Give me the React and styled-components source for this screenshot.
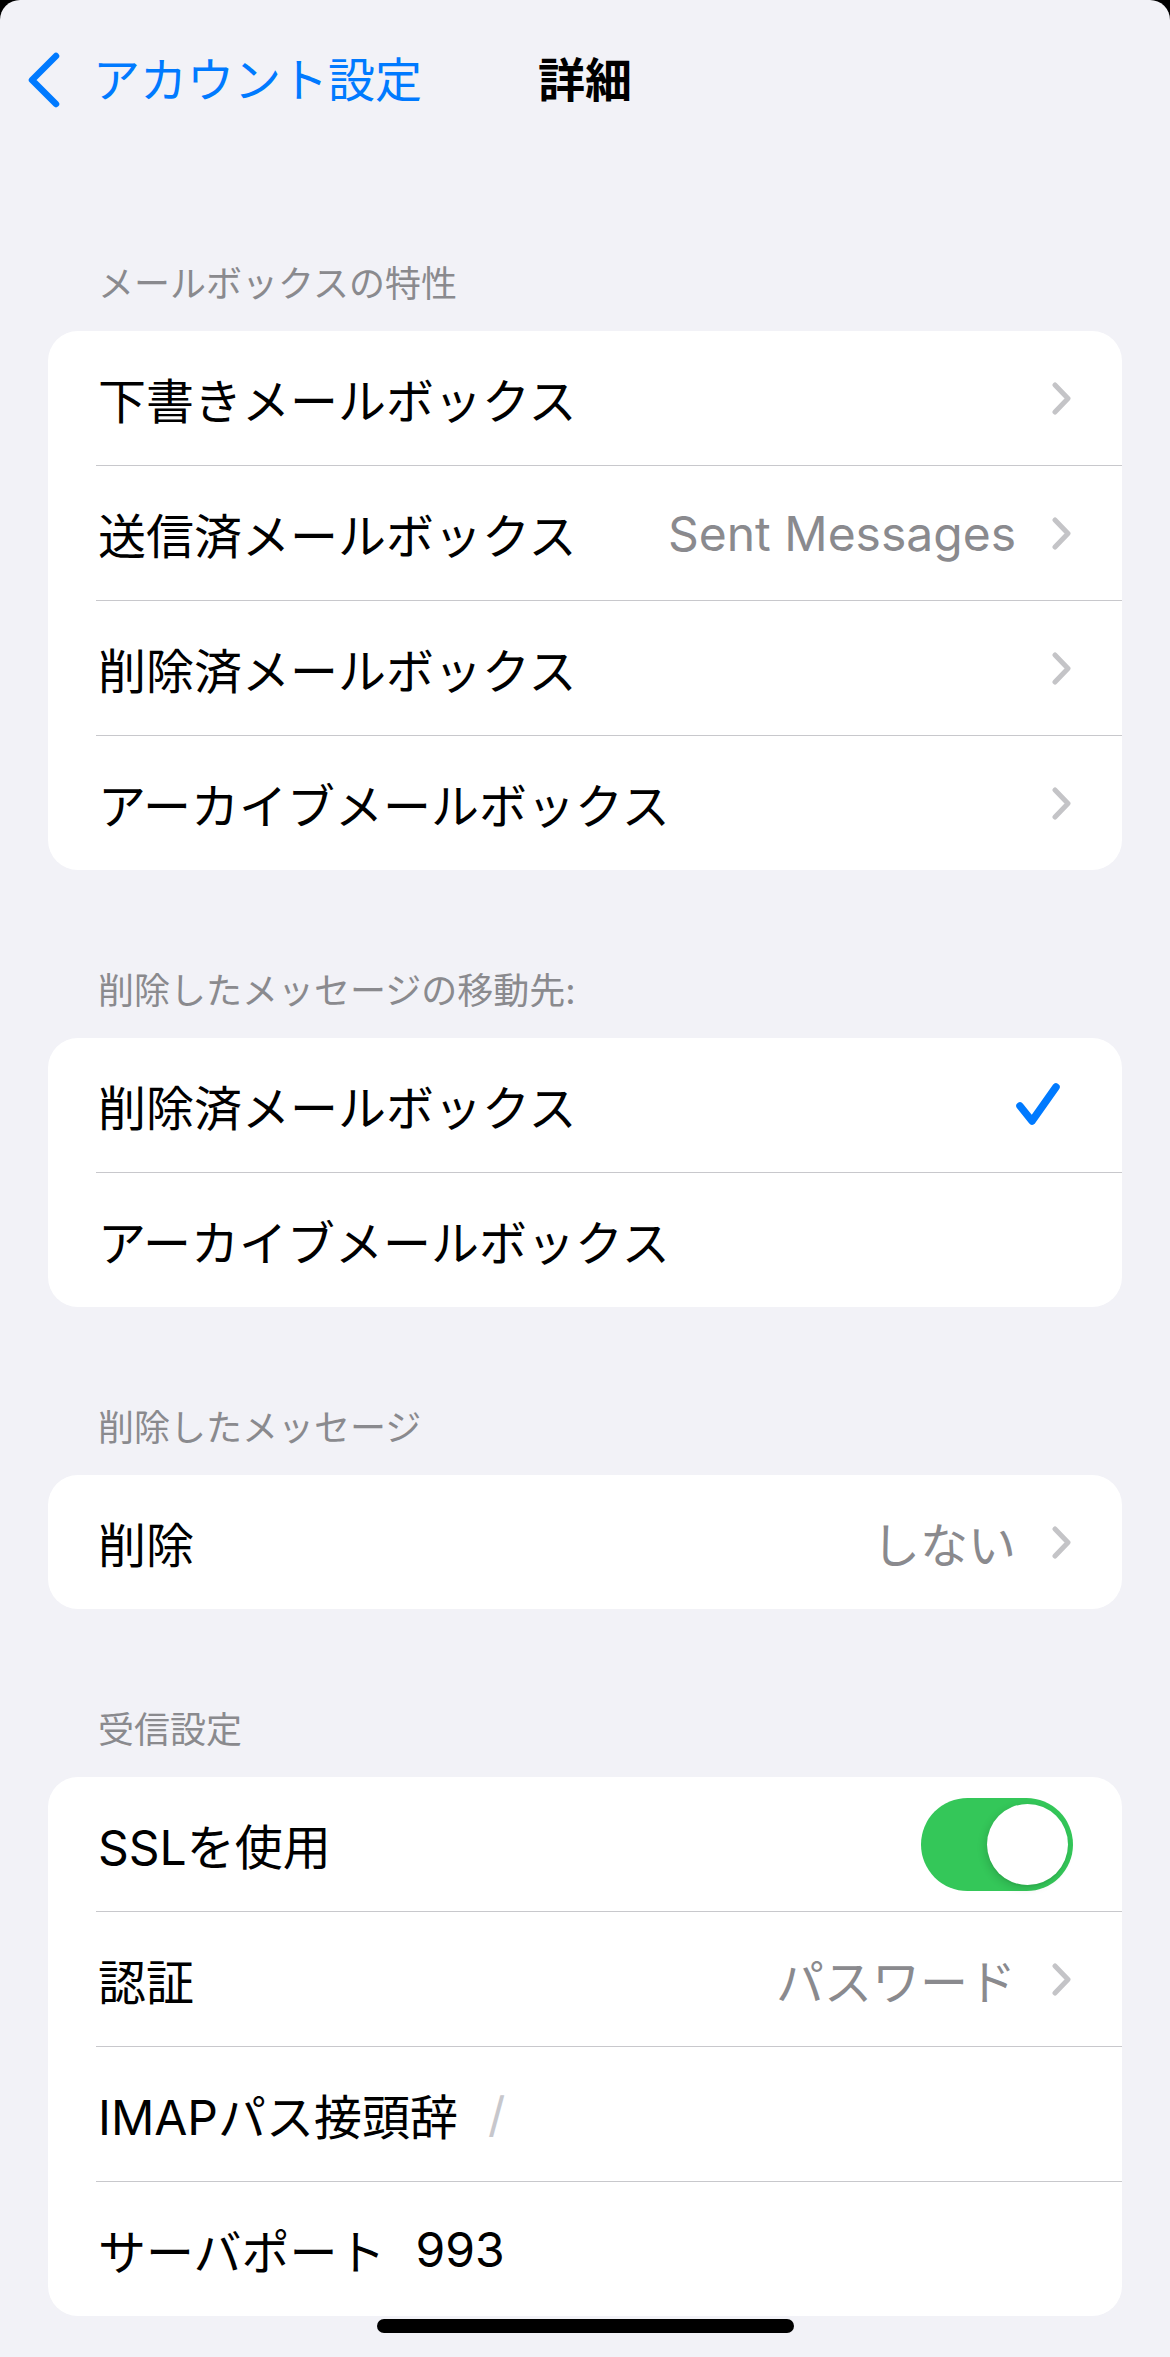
import React from 'react';
import styled, { createGlobalStyle } from 'styled-components';

const GlobalStyle = createGlobalStyle`
  body {
    margin: 0;
    background: #000;
  }
`;

// Page shell
const Screen = styled.div`
  position: relative;
  min-height: 2357px;
  background: #f2f2f7;
  border-radius: 20px 20px 0 0;
  font-family: 'Inter', 'Noto Sans CJK JP', sans-serif;
  color: #000;
  overflow: hidden;
`;

const NavBar = styled.header`
  height: 163px;
  display: grid;
  grid-template-columns: 1fr auto 1fr;
  align-items: start;
  padding-top: 52px;
  box-sizing: border-box;
`;

const BackButton = styled.div`
  display: flex;
  align-items: center;
  gap: 33px;
  padding-left: 28px;
  color: #007aff;
  font-size: 47px;
  line-height: 56px;
`;

const Title = styled.h1`
  margin: 0;
  font-size: 47px;
  line-height: 56px;
  font-weight: 700;
`;

const Content = styled.main`
  padding: 0 48px;
`;

const Section = styled.section`
  margin-top: 99px;
`;

const SectionHeader = styled.div`
  padding-left: 50px;
  margin-bottom: 25px;
  font-size: 36px;
  line-height: 44px;
  color: #8a8a8e;
`;

const Card = styled.div`
  background: #fff;
  border-radius: 30px;
  overflow: hidden;
`;

const Row = styled.div`
  display: flex;
  padding-left: 48px;
`;

const RowInner = styled.div`
  flex: 1;
  display: flex;
  align-items: center;
  height: 134px;
  padding-left: 2px;
  border-top: ${(p) => (p.$first ? 'none' : '1px solid #c8c8cc')};
`;

const Label = styled.span`
  font-size: 48px;
  color: #000;
  white-space: nowrap;
`;

const InlineValue = styled.span`
  margin-left: 30px;
  font-size: 48px;
  color: ${(p) => (p.$placeholder ? '#c7c7cc' : '#000')};
`;

const Value = styled.span`
  margin-left: auto;
  font-size: 48px;
  color: #8a8a8e;
  white-space: nowrap;
`;

const Trailing = styled.div`
  margin-left: ${(p) => (p.$auto ? 'auto' : '36px')};
  margin-right: ${(p) => p.$right}px;
  display: flex;
  align-items: center;
`;

const Toggle = styled.div`
  margin-left: auto;
  margin-right: 49px;
  width: 152px;
  height: 93px;
  border-radius: 47px;
  background: #34c759;
  display: flex;
  align-items: center;
  justify-content: flex-end;
  padding: 0 5px;
  box-sizing: border-box;
`;

const Knob = styled.div`
  width: 81px;
  height: 81px;
  border-radius: 50%;
  background: #fff;
  box-shadow: -2px 3px 8px rgba(0, 0, 0, 0.14), 0 2px 1px rgba(0, 0, 0, 0.04);
`;

const HomeIndicator = styled.div`
  position: absolute;
  left: 50%;
  bottom: 24px;
  width: 417px;
  height: 14px;
  margin-left: -208px;
  border-radius: 7px;
  background: #000;
`;

const BackChevron = () => (
  <svg width="32" height="56" viewBox="0 0 32 56">
    <path d="M28 4 L4 28 L28 52" fill="none" stroke="#007aff" strokeWidth="6.5" strokeLinecap="round" strokeLinejoin="round" />
  </svg>
);

const Chevron = () => (
  <svg width="19" height="33" viewBox="0 0 19 33">
    <path d="M3 3 L16 16.5 L3 30" fill="none" stroke="#c4c4c7" strokeWidth="5" strokeLinecap="round" strokeLinejoin="round" />
  </svg>
);

const Check = () => (
  <svg width="46" height="46" viewBox="0 0 46 46">
    <path d="M5 24 L17 39 L41 5" fill="none" stroke="#007aff" strokeWidth="7.5" strokeLinecap="round" strokeLinejoin="round" />
  </svg>
);

const ListRow = ({ first, children }) => (
  <Row>
    <RowInner $first={first}>{children}</RowInner>
  </Row>
);

const App = () => {
  const mailboxes = [
    { label: '下書きメールボックス' },
    { label: '送信済メールボックス', value: 'Sent Messages' },
    { label: '削除済メールボックス' },
    { label: 'アーカイブメールボックス' },
  ];

  return (
    <Screen>
      <GlobalStyle />
      <NavBar>
        <BackButton>
          <BackChevron />
          <span>アカウント設定</span>
        </BackButton>
        <Title>詳細</Title>
        <div />
      </NavBar>

      <Content>
        <Section>
          <SectionHeader>メールボックスの特性</SectionHeader>
          <Card>
            {mailboxes.map((m, i) => (
              <ListRow key={m.label} first={i === 0}>
                <Label>{m.label}</Label>
                {m.value && <Value>{m.value}</Value>}
                <Trailing $auto={!m.value} $right={51}>
                  <Chevron />
                </Trailing>
              </ListRow>
            ))}
          </Card>
        </Section>

        <Section>
          <SectionHeader>削除したメッセージの移動先:</SectionHeader>
          <Card>
            <ListRow first>
              <Label>削除済メールボックス</Label>
              <Trailing $auto $right={61}>
                <Check />
              </Trailing>
            </ListRow>
            <ListRow>
              <Label>アーカイブメールボックス</Label>
            </ListRow>
          </Card>
        </Section>

        <Section>
          <SectionHeader>削除したメッセージ</SectionHeader>
          <Card>
            <ListRow first>
              <Label>削除</Label>
              <Value>しない</Value>
              <Trailing $right={51}>
                <Chevron />
              </Trailing>
            </ListRow>
          </Card>
        </Section>

        <Section>
          <SectionHeader>受信設定</SectionHeader>
          <Card>
            <ListRow first>
              <Label>SSLを使用</Label>
              <Toggle>
                <Knob />
              </Toggle>
            </ListRow>
            <ListRow>
              <Label>認証</Label>
              <Value>パスワード</Value>
              <Trailing $right={51}>
                <Chevron />
              </Trailing>
            </ListRow>
            <ListRow>
              <Label>IMAPパス接頭辞</Label>
              <InlineValue $placeholder>/</InlineValue>
            </ListRow>
            <ListRow>
              <Label>サーバポート</Label>
              <InlineValue>993</InlineValue>
            </ListRow>
          </Card>
        </Section>
      </Content>

      <HomeIndicator />
    </Screen>
  );
};

export default App;
